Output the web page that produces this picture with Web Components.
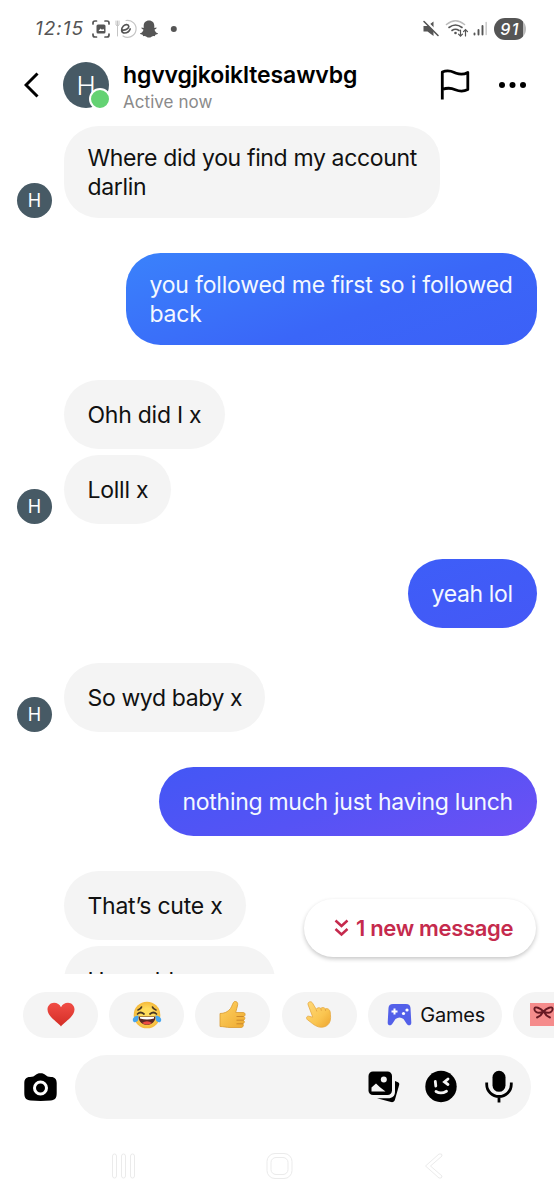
<!DOCTYPE html>
<html lang="en">
<head>
<meta charset="utf-8">
<title>Chat</title>
<style>
html,body{margin:0;padding:0;background:#fff}
body{width:554px;height:1200px;overflow:hidden;font-family:Inter,"Liberation Sans",sans-serif}
</style>
</head>
<body>
<chat-app></chat-app>
<script>
const define = (name, html) => {
  const t = document.createElement('template');
  t.innerHTML = html;
  customElements.define(name, class extends HTMLElement {
    constructor() {
      super();
      this.attachShadow({mode: 'open'}).appendChild(t.content.cloneNode(true));
    }
  });
};

define('status-bar', `
<style>
:host{display:flex;height:58px;box-sizing:border-box;padding:0 28px 0 35px;align-items:center;color:#555}
.time{font-size:19px;font-style:italic;font-weight:400;letter-spacing:1px;width:55px;line-height:20px;white-space:nowrap}
svg{display:block;flex:none}
.gap{flex:1}
.bat{width:32px;height:22px;border-radius:11px;background:linear-gradient(90deg,#555 29.500px,#bbb 29.500px);color:#fff;font-size:16px;font-weight:500;font-style:italic;line-height:22px;text-align:center;letter-spacing:1.500px;margin-left:6px}
</style>
<span class="time">12:15</span>
<svg width="90" height="24" viewBox="90 17 90 24" fill="none" stroke="#555" stroke-width="1.700" stroke-linecap="round" stroke-linejoin="round">
<path d="M93 24v-1q0-2 2-2h1.500M105 21h2q2 0 2 2v1M109 34v1q0 2-2 2h-2M96.500 37h-1.500q-2 0-2-2v-1"/>
<rect x="96.500" y="24.500" width="9" height="9" rx="1.500" fill="#555" stroke="none"/><path d="M98.500 31l2-2.500 1.500 1.300 1.500-1 .8 2.200z" fill="#fff" stroke="none"/>
<path d="M117.500 21v15M116 21v4q1.500 2 3 0v-4" stroke="#c4c4c4" stroke-width="1"/>
<path d="M126 20.500a8.500 8.500 0 1 1-3 15.500" stroke="#c4c4c4" stroke-width="1.200"/>
<path d="M122.500 30c2.500.5 6.500-1.500 6.300-3.700-.3-2-3.400-2.300-5.400-.3-2.800 2.800-2.200 7 1.300 7 2.500 0 4.700-2 5.500-4" stroke-width="1.700"/>
<path d="M149 20.500c3.400 0 5.300 2.400 5.300 5.200v2.200l2.200-.4c.5 1-1 1.600-2 2.200.5 2 2 3.200 3.500 3.600 0 1.100-1.600 1.200-2.600 1.500l-.6 1.400c-1.300-.2-2.300-.2-3.300.5-1.600 1.200-3.400 1.200-5 0-1-.7-2-.7-3.300-.5l-.6-1.400c-1-.3-2.600-.4-2.600-1.500 1.500-.4 3-1.600 3.500-3.600-1-.6-2.500-1.200-2-2.200l2.200.4v-2.200c0-2.800 1.900-5.200 5.300-5.200z" fill="#555" stroke="none"/>
<circle cx="173.800" cy="29" r="3" fill="#555" stroke="none"/>
</svg>
<span class="gap"></span>
<svg width="66" height="24" viewBox="423 17 66 24" fill="none" stroke="#555" stroke-width="1.600" stroke-linecap="round">
<path d="M424.500 26h4l6-4.500v14.500l-6-4.500h-4z" fill="#555" stroke="none"/>
<path d="M426.500 21l14 14" stroke="#fff" stroke-width="2.500"/><path d="M425 21.500l14 14"/>
<path d="M447.500 24.500q9-7.500 18 0" stroke="#bbb"/><path d="M450 27.500q6.500-5 13 0M453 30.500q3.500-2.500 7 0"/><circle cx="456.500" cy="33" r="1.300" fill="#555" stroke="none"/>
<path d="M461.500 30v6M459.500 34.200l2 2 2-2M466.500 36v-6M464.500 31.700l2-2 2 2" stroke-width="1.200"/>
<path d="M475.500 34.500v-1M479.500 34.500v-4.500M483.500 34.500v-8.500" stroke-width="1.900"/><path d="M487.200 34.500v-12" stroke="#ccc" stroke-width="1.600"/>
</svg>
<span class="bat">91</span>`);

define('user-avatar', `
<style>
:host{display:block;position:relative;width:35px;height:35px;flex:none;font-size:18px;color:#fff}
.c{box-sizing:border-box;width:100%;height:100%;border-radius:50%;background:#475a65;display:grid;place-items:center;line-height:1;padding-top:1px}
:host([large]){width:46px;height:46px;font-size:26px;font-weight:300}
i{display:none}
:host([large]) i{display:block;position:absolute;left:26px;top:26px;width:18px;height:18px;border-radius:50%;background:#64d273;border:2px solid #fff}
</style><div class="c"><slot></slot></div><i></i>`);

define('chat-header', `
<style>
:host{display:flex;height:62px;align-items:center;padding:0 27px 0 24px;box-sizing:border-box}
svg{display:block;flex:none;margin-top:-9px}
user-avatar{margin:-8px 0 0 24px}
.t{margin:-3px 0 0 14px;flex:1}
.n{font-size:23px;font-weight:600;line-height:30px;letter-spacing:-.12px;color:#000}
.s{font-size:17px;line-height:25px;color:#8a8a8a;letter-spacing:.05px}
</style>
<svg width="15" height="26" viewBox="0 0 15 26" fill="none" stroke="#000" stroke-width="3"><path d="M13.500 1.500L2 13l11.500 11.500"/></svg>
<user-avatar large>H</user-avatar>
<div class="t"><div class="n">hgvvgjkoikltesawvbg</div><div class="s">Active now</div></div>
<svg width="30" height="32" viewBox="441 69 30 32" fill="none" stroke="#000" stroke-width="2.800" stroke-linejoin="round"><path d="M443.300 99.500V72c7-3 10.500 0 14 1.300 4.500 1.600 8.500.8 11.500-.8v17c-5 2.600-8.700 1.800-12.500.2-4.500-2-8.500-2-13-.2"/></svg>
<svg style="margin-left:28px" width="29" height="8" viewBox="0 0 29 8"><circle cx="4" cy="4" r="3"/><circle cx="14.500" cy="4" r="3"/><circle cx="25" cy="4" r="3"/></svg>`);

define('chat-message', `
<style>
:host{display:flex;align-items:flex-end;margin-top:6px;padding:0 17.500px 0 17px;gap:12px}
:host([first]){margin-top:35px}
:host([own]){justify-content:flex-end}
.slot{width:35px;flex:none}
:host([own]) .slot{display:none}
.b{box-sizing:border-box;min-height:69px;border-radius:34.500px;background:#f4f4f4;color:#111;padding:18px 0 16px 23.500px;font-size:23px;line-height:29px;display:flex;align-items:center;white-space:pre;width:var(--w);letter-spacing:var(--ls,-.25px)}
:host([own]) .b{background:var(--bg);color:#f4f8ff}
user-avatar{display:none}
:host([avatar]) user-avatar{display:block}
</style>
<div class="slot"><user-avatar>H</user-avatar></div><div class="b"><span><slot></slot></span></div>`);

define('new-message-pill', `
<style>
:host{position:absolute;right:18px;bottom:17px;width:232px;height:58px;border-radius:29px;background:#fff;box-shadow:0 2px 4px rgba(0,0,0,.22);display:flex;align-items:center;box-sizing:border-box;padding-left:30px;color:#c52a4d;font-size:22px;font-weight:600;white-space:nowrap;letter-spacing:-.33px}
svg{margin-right:7px;flex:none}
</style>
<svg width="15" height="18" viewBox="0 0 15 18" fill="none" stroke="#c52a4d" stroke-width="2.500"><path d="M1.500 1.500l6 5.500 6-5.500M1.500 10l6 5.500 6-5.500"/></svg><slot></slot>`);

define('reaction-chip', `
<style>
:host{display:flex;flex:none;width:75px;height:46px;border-radius:23px;background:#f4f4f4;align-items:center;justify-content:center;box-sizing:border-box;color:#111;font-size:20px}
:host([wide]){width:134px;justify-content:flex-start;padding-left:19px;gap:8.500px}
</style><slot></slot>`);

define('quick-bar', `
<style>
:host{display:flex;gap:11.200px;padding:18px 0 0 23px;overflow:hidden;height:46px}
svg{display:block;flex:none;margin-top:-1px}
span{margin-top:-1px;letter-spacing:-.2px}
</style>
<reaction-chip><svg width="28" height="25" viewBox="0 0 28 25"><defs><linearGradient id="h" x1="0" y1="0" x2="0" y2="1"><stop stop-color="#f14d45"/><stop offset="1" stop-color="#d32d26"/></linearGradient></defs><path d="M14 24.500C11 20 .5 15 .5 7.500.5 3.500 3.500.7 7 .7c3.200 0 5.700 1.600 7 4.600C15.300 2.300 17.800.7 21 .7c3.500 0 6.500 2.800 6.500 6.800 0 7.500-10.500 12.500-13.500 17z" fill="url(#h)"/></svg></reaction-chip>
<reaction-chip><svg width="30" height="28" viewBox="0 0 30 28"><defs><radialGradient id="y"><stop offset=".5" stop-color="#ffdc5c"/><stop offset="1" stop-color="#f5b93b"/></radialGradient></defs><circle cx="15" cy="14" r="13.300" fill="url(#y)"/><path d="M6 9q3-1 3.500-3M24 9q-3-1-3.500-3M5.500 13q3-3 6.500 0M18 13q3.500-3 6.500 0" fill="none" stroke="#493824" stroke-width="1.700" stroke-linecap="round"/><path d="M6.500 15.500h17c0 5-3.500 8.300-8.500 8.300s-8.500-3.300-8.500-8.300z" fill="#5b2723"/><path d="M8 16h14v1.500q-7 2-14 0z" fill="#fff"/><path d="M10 22q5-3.500 10 0-5 3.200-10 0z" fill="#ee4c42"/><path d="M6.500 14.500c-4 0-6.500 3-5.500 5.500 1 2.300 4.500 1.300 5.300-1.500zM23.500 14.500c4 0 6.500 3 5.500 5.500-1 2.300-4.500 1.300-5.300-1.500z" fill="#47a6ef"/></svg></reaction-chip>
<reaction-chip><svg width="27" height="28" viewBox="0 0 27 28"><defs><linearGradient id="t" x1="0" y1="0" x2="1" y2="1"><stop stop-color="#ffd364"/><stop offset="1" stop-color="#eeaa30"/></linearGradient></defs><path d="M1 12.500c4 0 8-1.500 10.500-5 1.700-2.500 2.500-6.500 4-7 2-.5 3.500 1 3.200 3.200-.3 2.800-1.700 5.500-2 7.800h7.500c2.500 0 2.500 3.700.3 4 2 .5 1.700 3.500-.3 3.700 1.800.6 1.300 3.400-.5 3.600 1.300.8.600 3.700-1.500 3.700H11c-4 0-6-1-10-1z" fill="url(#t)" stroke="#d99a30" stroke-width=".8"/><path d="M17.500 15.500h7M17.500 19.200h7M17.500 22.800h6.500" stroke="#cb882a" stroke-width="1" fill="none"/></svg></reaction-chip>
<reaction-chip><svg width="26" height="28" viewBox="0 0 26 28"><defs><linearGradient id="p" x1="0" y1="0" x2="1" y2="1"><stop stop-color="#ffd97a"/><stop offset=".6" stop-color="#fac550"/><stop offset="1" stop-color="#eda42e"/></linearGradient></defs><path d="M3.200 1c1.500-.7 2.900 0 3.700 1.700l3.300 5.500c1-1.700 3.300-1.900 4.600-.9 1.500-1.200 3.400-.9 4.400.5 2.300-.7 4.700.6 5 3.200.4 3.700.8 7.300-.5 10.200-1.800 4-6.700 6-11.500 4.600C8 24.500 5.200 21.300 1.500 18.800c-1.800-1.500-.8-4 1.300-3.600l4 1L2.200 4C1.600 2.500 2.200 1.500 3.200 1z" fill="url(#p)" stroke="#e6aa43" stroke-width=".8"/><path d="M10.200 8.500l.6 2M14.800 7.500l.6 2.300M19.200 8l.5 2" stroke="#dfa03c" stroke-width=".8" fill="none"/></svg></reaction-chip>
<reaction-chip wide><svg width="25" height="23" viewBox="0 0 25 23"><path d="M6 1h13c3 0 4.200 1.500 4.500 4l.8 14.500c.1 3-3 3.800-4.500 1.500L16.500 16q-4-3-8 0l-3.300 5C3.700 23.300.6 22.500.7 19.500L1.500 5C1.800 2.500 3 1 6 1z" fill="#5360e9"/><path d="M7.500 5.500v6M4.500 8.500h6" stroke="#fff" stroke-width="2"/><circle cx="20" cy="7" r="1.600" fill="#fff"/><circle cx="16.500" cy="10.500" r="1.600" fill="#fff"/></svg><span>Games</span></reaction-chip>
<reaction-chip wide style="padding-left:17px"><svg width="40" height="23" viewBox="0 0 40 23"><path d="M0 0h40v23H0z" fill="#f58c8c"/><path d="M13.500 8.500C10 5 5 3 4.500 5.500S7 11.500 13.500 8.500C17 5 22 3 22.500 5.500S20 11.500 13.500 8.500zM13 9q-2 4-6 5.500M14 9q2 4 6 5.500" fill="none" stroke="#671923" stroke-width="1.900" stroke-linecap="round"/></svg></reaction-chip>`);

define('composer-bar', `
<style>
:host{display:flex;align-items:center;padding:17px 23px 0 23.500px}
svg{display:block;flex:none;margin-top:-1px}
.in{flex:1;height:64px;border-radius:32px;background:#f4f4f4;margin-left:18.500px;display:flex;align-items:center;justify-content:flex-end;gap:25px;padding-right:17px;box-sizing:border-box}
</style>
<svg width="33" height="28" viewBox="0 0 33 28"><path d="M6 4c3 0 4-.7 5.500-2C13 .8 14 .3 16.500.3S20 .8 21.500 2C23 3.300 24 4 27 4c4 0 5.700 2.500 5.700 6v10c0 5-1.500 7-6 7.500q-10 .8-20 0C2 27 .3 25 .3 20V10C.3 6.500 2 4 6 4z"/><circle cx="16.500" cy="15" r="6" fill="#000" stroke="#fff" stroke-width="3"/></svg>
<div class="in">
<svg width="32" height="32" viewBox="0 0 32 32"><path d="M27 10l3 1.200c1 .5 1.500 1.300 1.200 2.500L27 28.500c-.6 2-2 3-4 2.600L9 27.300h11c4.500 0 7-2.300 7-6.500z"/><rect x=".5" y=".5" width="23.500" height="23.500" rx="4.500"/><path d="M3.500 20.500v-4l4.500-4 4 3.800 5.500 4.200z" fill="#f4f4f4"/><circle cx="15.800" cy="8.500" r="3" fill="#f4f4f4"/></svg>
<svg width="33" height="33" viewBox="0.500 0 33 33" style="margin-right:1px"><circle cx="16.500" cy="16.500" r="15.700"/><path d="M10.800 11.500l.5 4.500M23.500 9l-3.500 3 3.500 2.500M11.500 21.500q5 3 10.500-.3" fill="none" stroke="#f4f4f4" stroke-width="2.800" stroke-linecap="round"/></svg>
<svg width="30" height="33" viewBox="0 0 30 33"><rect x="8.500" y=".8" width="13" height="21" rx="6.500"/><path d="M2.700 12.500v2a12.300 12 0 0 0 24.600 0v-2M15 26.500v6" fill="none" stroke="#000" stroke-width="2.800"/></svg>
</div>`);

define('nav-bar', `
<style>:host{display:flex;justify-content:space-between;padding:30.500px 108.500px 0 110px}svg{display:block}</style>
<svg width="28" height="32" viewBox="0 0 28 32" fill="#fff" stroke="#ebebeb"><rect x="2.500" y="4" width="4" height="24" rx="2"/><rect x="11.500" y="4" width="4" height="24" rx="2"/><rect x="20.500" y="4" width="4" height="24" rx="2"/></svg>
<svg width="30" height="32" viewBox="0.500 0 30 32" fill="#fff" stroke="#ebebeb"><rect x="2.500" y="3.500" width="25" height="25" rx="8"/><rect x="6.500" y="7.500" width="17" height="17" rx="5"/></svg>
<svg width="24" height="32" viewBox="0 0 24 32" fill="#fff" stroke="#ebebeb"><path d="M17 4L3.500 16 17 28q3 1 3-2L8.500 16 20 6q.5-3-3-2z"/></svg>`);

define('chat-app', `
<style>
:host{display:flex;flex-direction:column;width:554px;height:1200px;background:#fff;overflow:hidden}
main{position:relative;height:854px;overflow:hidden;flex:none}
status-bar,chat-header,quick-bar,composer-bar,nav-bar{flex:none}
</style>
<status-bar></status-bar>
<chat-header></chat-header>
<main>
<chat-message avatar style="--w:376px;--ls:-.35px;margin-top:5.500px">Where did you find my account
darlin</chat-message>
<chat-message own first style="--w:410.500px;--ls:-.2px;--bg:linear-gradient(160deg,#3a82fb,#3a66f8 60%,#3c60f7)">you followed me first so i followed
back</chat-message>
<chat-message first style="--w:161px">Ohh did I x</chat-message>
<chat-message avatar style="--w:107px">Lolll x</chat-message>
<chat-message own first style="--w:128.500px;--ls:-.35px;--bg:linear-gradient(160deg,#3d5ef8,#4558f6)">yeah lol</chat-message>
<chat-message avatar first style="--w:201px;--ls:-.38px">So wyd baby x</chat-message>
<chat-message own first style="--w:377.500px;--ls:-.28px;--bg:linear-gradient(160deg,#4357f5,#5553f5 50%,#6d50f4)">nothing much just having lunch</chat-message>
<chat-message first style="--w:182px">That’s cute x</chat-message>
<chat-message style="--w:211px;--ls:-.45px">How old are you</chat-message>
<new-message-pill>1 new message</new-message-pill>
</main>
<quick-bar></quick-bar>
<composer-bar></composer-bar>
<nav-bar></nav-bar>`);
</script>
</body>
</html>
